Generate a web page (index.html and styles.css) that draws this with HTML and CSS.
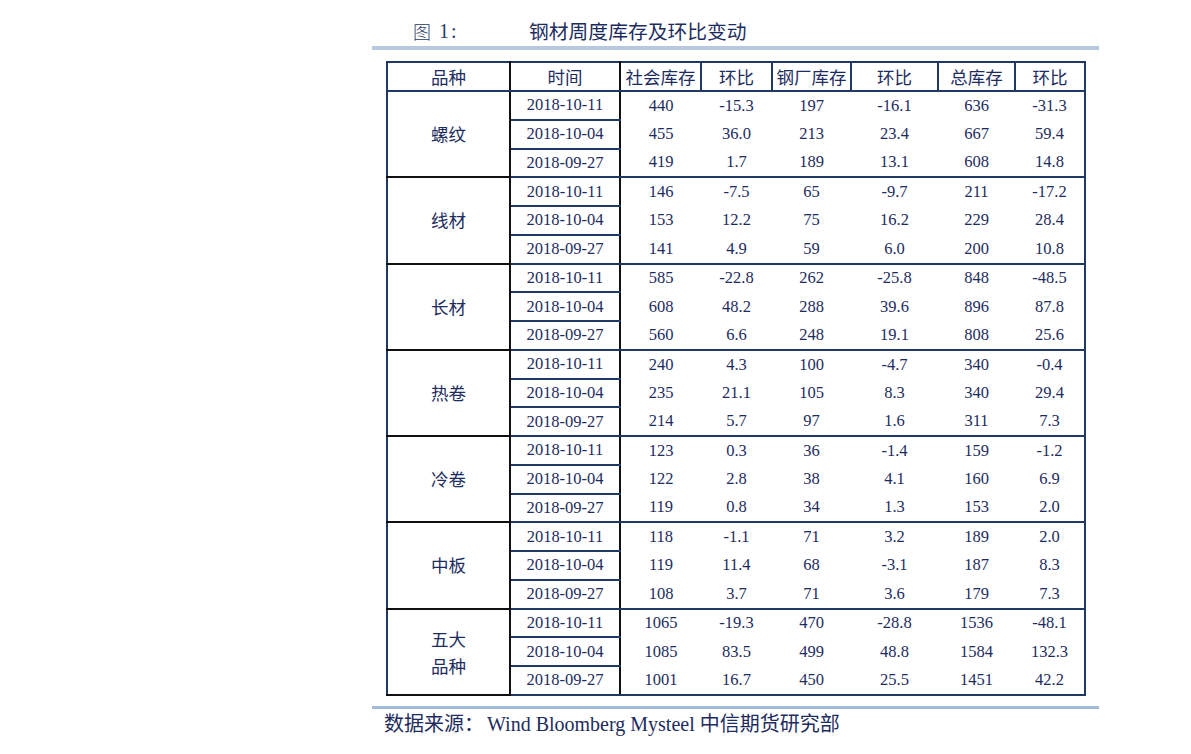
FILE: index.html
```html
<!DOCTYPE html>
<html lang="zh">
<head>
<meta charset="utf-8">
<title>钢材周度库存及环比变动</title>
<link rel="stylesheet" href="styles.css">
</head>
<body>
<div class="figure">
  <div class="title">
    <span class="fig-no"><span class="fig-word">图</span><span class="fig-num">1:</span></span>
    <span class="fig-name">钢材周度库存及环比变动</span>
  </div>
  <div class="rule rule-top"></div>
  <table class="data">
    <colgroup>
      <col class="c1"><col class="c2"><col class="c3"><col class="c4"><col class="c5"><col class="c6"><col class="c7"><col class="c8">
    </colgroup>
    <thead>
      <tr>
        <th class="h-first">品种</th><th class="h-date">时间</th><th>社会库存</th><th>环比</th><th>钢厂库存</th><th>环比</th><th>总库存</th><th>环比</th>
      </tr>
    </thead>
    <tbody>
      <tr><td class="kind" rowspan="3">螺纹</td><td class="date">2018-10-11</td><td>440</td><td>-15.3</td><td>197</td><td>-16.1</td><td>636</td><td>-31.3</td></tr>
      <tr><td class="date">2018-10-04</td><td>455</td><td>36.0</td><td>213</td><td>23.4</td><td>667</td><td>59.4</td></tr>
      <tr class="last"><td class="date">2018-09-27</td><td>419</td><td>1.7</td><td>189</td><td>13.1</td><td>608</td><td>14.8</td></tr>

      <tr><td class="kind" rowspan="3">线材</td><td class="date">2018-10-11</td><td>146</td><td>-7.5</td><td>65</td><td>-9.7</td><td>211</td><td>-17.2</td></tr>
      <tr><td class="date">2018-10-04</td><td>153</td><td>12.2</td><td>75</td><td>16.2</td><td>229</td><td>28.4</td></tr>
      <tr class="last"><td class="date">2018-09-27</td><td>141</td><td>4.9</td><td>59</td><td>6.0</td><td>200</td><td>10.8</td></tr>

      <tr><td class="kind" rowspan="3">长材</td><td class="date">2018-10-11</td><td>585</td><td>-22.8</td><td>262</td><td>-25.8</td><td>848</td><td>-48.5</td></tr>
      <tr><td class="date">2018-10-04</td><td>608</td><td>48.2</td><td>288</td><td>39.6</td><td>896</td><td>87.8</td></tr>
      <tr class="last"><td class="date">2018-09-27</td><td>560</td><td>6.6</td><td>248</td><td>19.1</td><td>808</td><td>25.6</td></tr>

      <tr><td class="kind" rowspan="3">热卷</td><td class="date">2018-10-11</td><td>240</td><td>4.3</td><td>100</td><td>-4.7</td><td>340</td><td>-0.4</td></tr>
      <tr><td class="date">2018-10-04</td><td>235</td><td>21.1</td><td>105</td><td>8.3</td><td>340</td><td>29.4</td></tr>
      <tr class="last"><td class="date">2018-09-27</td><td>214</td><td>5.7</td><td>97</td><td>1.6</td><td>311</td><td>7.3</td></tr>

      <tr><td class="kind" rowspan="3">冷卷</td><td class="date">2018-10-11</td><td>123</td><td>0.3</td><td>36</td><td>-1.4</td><td>159</td><td>-1.2</td></tr>
      <tr><td class="date">2018-10-04</td><td>122</td><td>2.8</td><td>38</td><td>4.1</td><td>160</td><td>6.9</td></tr>
      <tr class="last"><td class="date">2018-09-27</td><td>119</td><td>0.8</td><td>34</td><td>1.3</td><td>153</td><td>2.0</td></tr>

      <tr><td class="kind" rowspan="3">中板</td><td class="date">2018-10-11</td><td>118</td><td>-1.1</td><td>71</td><td>3.2</td><td>189</td><td>2.0</td></tr>
      <tr><td class="date">2018-10-04</td><td>119</td><td>11.4</td><td>68</td><td>-3.1</td><td>187</td><td>8.3</td></tr>
      <tr class="last"><td class="date">2018-09-27</td><td>108</td><td>3.7</td><td>71</td><td>3.6</td><td>179</td><td>7.3</td></tr>

      <tr><td class="kind kind-two" rowspan="3">五大<br>品种</td><td class="date">2018-10-11</td><td>1065</td><td>-19.3</td><td>470</td><td>-28.8</td><td>1536</td><td>-48.1</td></tr>
      <tr><td class="date">2018-10-04</td><td>1085</td><td>83.5</td><td>499</td><td>48.8</td><td>1584</td><td>132.3</td></tr>
      <tr class="last"><td class="date">2018-09-27</td><td>1001</td><td>16.7</td><td>450</td><td>25.5</td><td>1451</td><td>42.2</td></tr>
    </tbody>
  </table>
  <div class="rule rule-bottom"></div>
  <div class="source">数据来源：<span class="src-latin">Wind Bloomberg Mysteel</span> 中信期货研究部</div>
</div>
</body>
</html>
```

FILE: styles.css
```css
html, body {
  margin: 0;
  padding: 0;
  background: #ffffff;
}

body {
  color: #1d2c5e;
  font-family: "Liberation Serif", "Noto Sans CJK SC", serif;
}

.figure {
  width: 727px;
  margin-left: 372px;
  padding-top: 18px;
}

.title {
  display: flex;
  align-items: center;
  height: 26px;
  font-size: 20px;
  line-height: 26px;
}

.fig-no {
  display: flex;
  align-items: center;
  margin-left: 41px;
  width: 116px;
  color: #2a3a66;
}

.fig-word {
  font-family: "Noto Sans CJK SC", sans-serif;
  font-weight: 300;
  font-size: 18px;
}

.fig-num {
  margin-left: 8px;
  font-family: "Liberation Serif", serif;
  letter-spacing: 2px;
}

.fig-name {
  font-family: "Noto Sans CJK SC", sans-serif;
  font-size: 19.8px;
  color: #1d2c5e;
}

.rule {
  width: 727px;
}

.rule-top {
  margin-top: 2px;
  height: 4px;
  background: #b8c8df;
}

.rule-bottom {
  margin-top: 10px;
  height: 3px;
  background: #a3bad9;
}

.data {
  margin-top: 11px;
  margin-left: 14px;
  width: 699px;
  border-collapse: collapse;
  table-layout: fixed;
  border: 2px solid #1f3864;
}

.c1 { width: 123px; }
.c2 { width: 110px; }
.c3 { width: 81px; }
.c4 { width: 71px; }
.c5 { width: 79px; }
.c6 { width: 87px; }
.c7 { width: 77px; }
.c8 { width: 70px; }

.data th {
  height: 27px;
  padding: 0;
  font-family: "Noto Sans CJK SC", sans-serif;
  font-weight: 400;
  font-size: 17.5px;
  line-height: 20px;
  text-align: center;
  vertical-align: middle;
  border: 2px solid #1f3864;
  white-space: nowrap;
}

.data th.h-first,
.data th.h-date {
  border-right-color: #111111;
}

.data td {
  height: 26.75px;
  padding: 0;
  font-size: 16.5px;
  line-height: 20px;
  text-align: center;
  vertical-align: middle;
  white-space: nowrap;
}

.data tr.last td {
  border-bottom: 2px solid #1f3864;
}

.data td.kind {
  font-family: "Noto Sans CJK SC", sans-serif;
  font-size: 17.5px;
  border-right: 2px solid #111111;
  border-bottom: 2px solid #111111;
}

.data td.kind-two {
  line-height: 27px;
}

.data td.date {
  border-right: 2px solid #111111;
  border-bottom: 2px solid #1f3864;
}

.source {
  margin-top: 2px;
  margin-left: 12px;
  font-size: 20px;
  line-height: 26px;
  color: #1d2c5e;
  white-space: nowrap;
}

.src-latin {
  margin-left: 3px;
}
```
